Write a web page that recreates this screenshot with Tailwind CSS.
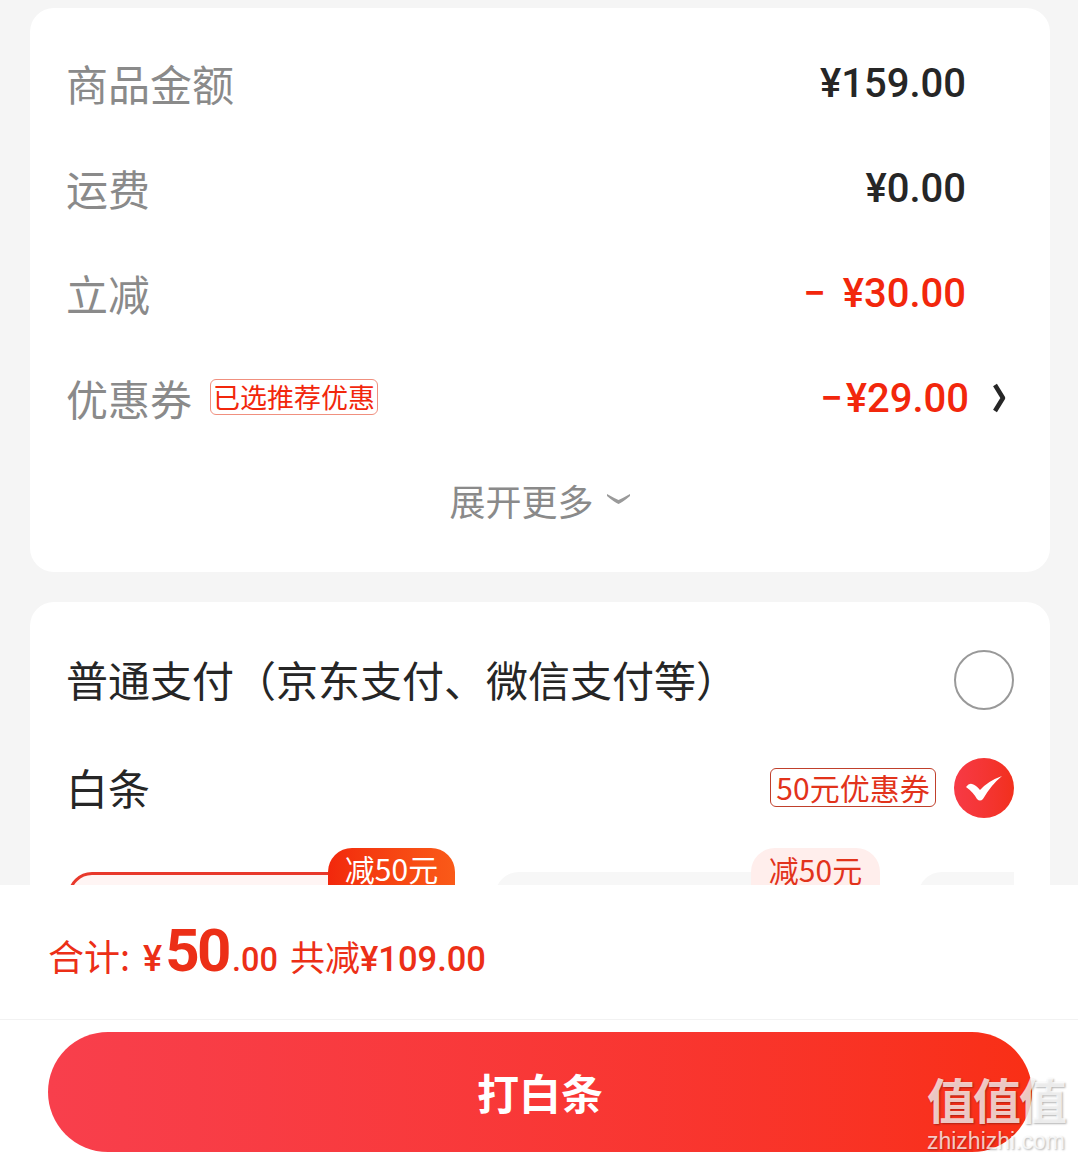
<!DOCTYPE html>
<html lang="zh-CN"><head><meta charset="utf-8">
<script src="https://cdn.jsdelivr.net/npm/@tailwindcss/browser@4"></script>
</head>
<body class="m-0">
<div class="relative w-[1078px] h-[1157px] overflow-hidden flex flex-col bg-[#f5f5f5] font-['Noto_Sans_CJK_SC','Noto_Sans',sans-serif]">
  <div class="h-[885px] shrink-0 overflow-hidden pt-2 pl-[30px] pr-[28px]">
    <section class="h-[564px] bg-white rounded-[24px] pl-[36px] pr-[44px] pt-[24px] text-[42px] leading-[56px] text-[#8a8a8a]">
      <div class="h-[105px] flex items-center justify-between"><span class="-mt-[4px]">商品金额</span><span class="font-['Roboto'] font-medium text-[40px] text-[#262626] -mt-[2px] mr-[40px]">¥159.00</span></div>
      <div class="h-[105px] flex items-center justify-between"><span class="-mt-[4px]">运费</span><span class="font-['Roboto'] font-medium text-[40px] text-[#262626] -mt-[2px] mr-[40px]">¥0.00</span></div>
      <div class="h-[105px] flex items-center justify-between"><span class="-mt-[4px]">立减</span><span class="font-['Roboto'] font-medium text-[40px] text-[#f2270c] -mt-[2px] mr-[40px]"><span class="mr-[7px]">−</span>&nbsp;¥30.00</span></div>
      <div class="h-[105px] flex items-center"><span class="-mt-[4px]">优惠券</span>
        <span class="ml-[18px] -mt-[6px] h-[36px] w-[168px] flex items-center justify-center border border-[#f0907f] rounded-[6px] text-[27px] leading-[34px] text-[#f2270c]">已选推荐优惠</span>
        <span class="ml-auto font-['Roboto'] font-medium text-[40px] text-[#f2270c] -mt-[2px]"><span class="mr-[3px]">−</span>¥29.00</span>
        <svg class="ml-[23px] -mt-[4px]" width="14" height="30" viewBox="0 0 14 30" fill="none"><path d="M3 2 L11 15 L3 28" stroke="#262626" stroke-width="4.5" stroke-linejoin="round"/></svg>
      </div>
      <div class="h-[96px] flex items-center justify-center text-[36px] pl-[8px]"><span>展开更多</span>
        <svg class="ml-[12px] -mt-[2px]" width="25" height="12" viewBox="0 0 25 12" fill="none"><path d="M1 1 Q8 5 12.5 7 Q17 5 24 1 L24 3 Q17 9 12.5 11 Q8 9 1 3 Z" fill="#9a9a9a"/></svg>
      </div>
    </section>
    <section class="relative mt-[30px] h-[400px] bg-white rounded-[24px] pl-[36px] pr-[36px] pt-[24px] text-[42px] leading-[56px] text-[#262626]">
      <div class="h-[108px] flex items-center justify-between"><span class="-mt-[2px]">普通支付（京东支付、微信支付等）</span>
        <span class="w-[60px] h-[60px] rounded-full border-[2.5px] border-[#999999]"></span></div>
      <div class="h-[108px] flex items-center"><span class="-mt-[2px]">白条</span>
        <span class="ml-auto -mt-[2px] h-[39px] w-[166px] flex items-center justify-center border border-[#c0402c] rounded-[6px] text-[30px] leading-[36px] text-[#e2331b]">50元优惠券</span>
        <span class="ml-[18px] w-[60px] h-[60px] rounded-full bg-gradient-to-r from-[#f73a45] to-[#f2301c] flex items-center justify-center">
          <svg width="38" height="26" viewBox="0 0 38 26"><path d="M1 12 Q4 8 7 9 Q11 10 15 15 Q23 6 37 1 Q26 10 18 24 Q15 27 12 24 Q8 17 1 12 Z" fill="#fff"/></svg>
        </span></div>
      <div class="relative flex ml-[2px] mt-[24px]">
        <div class="relative w-[388px] h-[120px] rounded-[24px] border-[3px] border-[#e8392c] bg-[#fff5f4] mt-[6px]"></div>
        <span class="absolute left-[260px] -top-[18px] w-[127px] h-[60px] rounded-t-[24px] rounded-bl-[24px] bg-gradient-to-r from-[#f2270c] to-[#fa5a18] text-white text-[30px] leading-[40px] text-center">减50元</span>
        <div class="absolute left-[427px] top-[6px] w-[388px] h-[120px] rounded-[24px] bg-[#f7f7f7]"></div>
        <span class="absolute left-[683px] -top-[18px] w-[129px] h-[60px] rounded-t-[24px] bg-[#ffeeec] text-[#e2331b] text-[30px] leading-[42px] text-center">减50元</span>
        <div class="absolute left-[850px] top-[6px] w-[96px] h-[120px] rounded-l-[24px] bg-[#f7f7f7]"></div>
      </div>
    </section>
  </div>
  <div class="flex-1 bg-white flex flex-col">
    <div class="h-[135px] shrink-0 border-b border-[#f2f2f2] pl-[48px] flex items-baseline text-[#ec2f17] pt-[30px]">
      <span class="text-[36px] leading-[72px]">合计:</span>
      <span class="ml-[13px] font-['Roboto'] font-medium text-[36px]">¥</span>
      <span class="ml-[3px] font-['Roboto'] font-bold text-[60px] leading-[72px] tracking-[-2.5px]">50</span>
      <span class="ml-[3px] font-['Roboto'] font-medium text-[32.5px]">.00</span>
      <span class="ml-[12px] text-[35px]">共减</span>
      <span class="font-['Roboto'] font-medium text-[34.5px]">¥109.00</span>
    </div>
    <div class="px-[46px] pt-[12px]">
      <div class="ml-[2px] h-[120px] w-[984px] rounded-[60px] bg-gradient-to-r from-[#f83f4c] to-[#f92f15] flex items-center justify-center text-white text-[42px] font-bold pb-[2px]">打白条</div>
    </div>
  </div>
  <div class="absolute left-[921px] top-[1068px] w-[150px] text-center text-white/75 [text-shadow:1px_1px_2px_rgba(0,0,0,0.3)]">
    <div class="text-[48px] leading-[60px] font-bold tracking-[-2px] whitespace-nowrap">值值值</div>
    <div class="font-['Liberation_Sans'] text-[23px] leading-[24px] whitespace-nowrap mt-[1px]">zhizhizhi.com</div>
  </div>
</div>
</body></html>
